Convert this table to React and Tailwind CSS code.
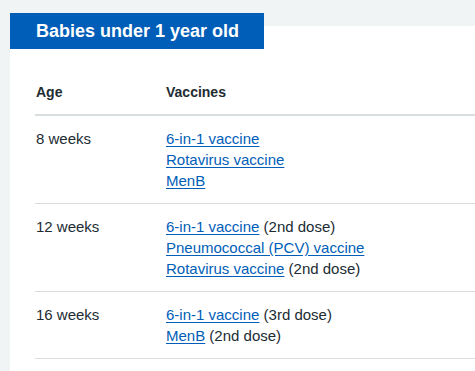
const rows = [
  {
    age: "8 weeks",
    items: [
      { link: "6-in-1 vaccine" },
      { link: "Rotavirus vaccine" },
      { link: "MenB" },
    ],
  },
  {
    age: "12 weeks",
    items: [
      { link: "6-in-1 vaccine", note: "(2nd dose)" },
      { link: "Pneumococcal (PCV) vaccine" },
      { link: "Rotavirus vaccine", note: "(2nd dose)" },
    ],
  },
  {
    age: "16 weeks",
    items: [
      { link: "6-in-1 vaccine", note: "(3rd dose)" },
      { link: "MenB", note: "(2nd dose)" },
    ],
  },
];

export default function App() {
  return (
    <div
      className="w-[475px] h-[371px] overflow-hidden bg-[#f0f4f5] pt-[26px] pl-[10px] text-[#212b32]"
      style={{ fontFamily: '"Liberation Sans", Arial, sans-serif' }}
    >
      <section className="flex h-[400px] w-[560px] flex-col items-start bg-white">
        <h2 className="-mt-[13px] h-[36px] bg-[#005eb8] pl-[26px] pr-[25px] text-[18px] font-bold leading-[36px] text-white">
          Babies under 1 year old
        </h2>
        <table className="mt-[21px] ml-[25px] w-[525px] border-collapse text-left">
          <thead>
            <tr className="border-b-2 border-[#d8dde0]">
              <th className="w-[131px] pt-[12px] pb-[11px] pl-px text-[14px] font-bold leading-[21px]">
                Age
              </th>
              <th className="pt-[12px] pb-[11px] text-[14px] font-bold leading-[21px]">
                Vaccines
              </th>
            </tr>
          </thead>
          <tbody>
            {rows.map((row) => (
              <tr key={row.age} className="border-b border-[#d8dde0] align-top">
                <td className="pt-[12px] pb-[12px] pl-px text-[15px] leading-[21px]">{row.age}</td>
                <td className="pt-[12px] pb-[12px] text-[15px] leading-[21px]">
                  {row.items.map((item, i) => (
                    <div key={i}>
                      <a href="#" className="text-[#005eb8] underline underline-offset-2">
                        {item.link}
                      </a>
                      {item.note && <span> {item.note}</span>}
                    </div>
                  ))}
                </td>
              </tr>
            ))}
          </tbody>
        </table>
      </section>
    </div>
  );
}
